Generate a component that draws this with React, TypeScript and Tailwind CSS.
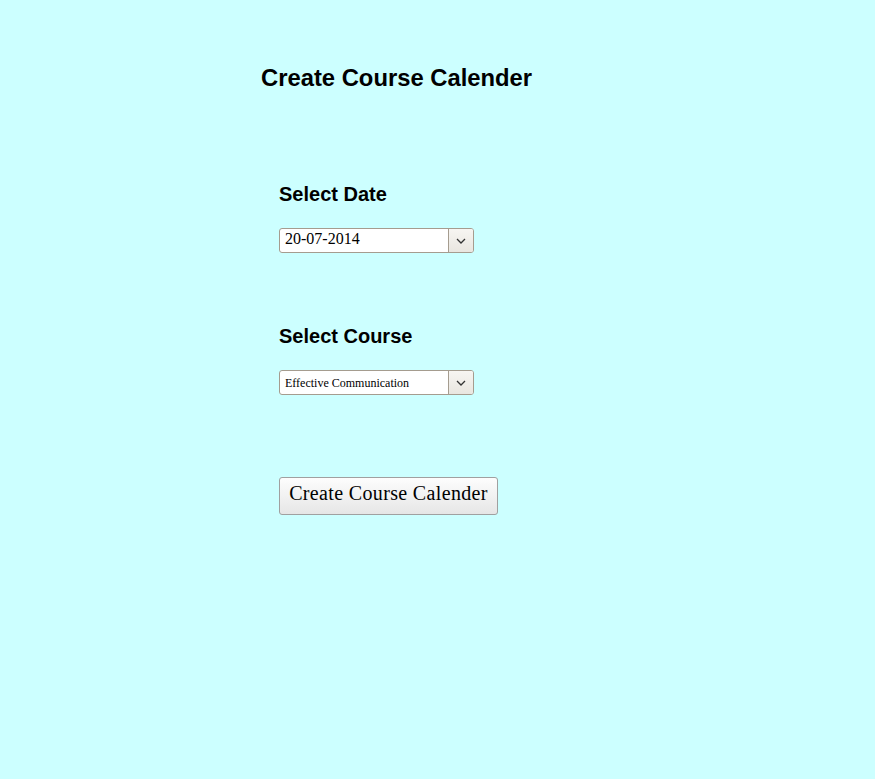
import React from "react";

function Chevron() {
  return (
    <svg width="10" height="6" viewBox="0 0 10 6" fill="none">
      <path d="M1 1 L5 5 L9 1" stroke="#333" strokeWidth="1.3" />
    </svg>
  );
}

function FakeSelect({ value, small }: { value: string; small?: boolean }) {
  return (
    <div className="flex h-[25px] w-[195px] rounded-[3px] border border-[#a59c8f] bg-white">
      <div
        className={`flex flex-1 items-center pl-[5px] text-black ${small ? "text-[12px]" : "pb-[3px] text-[16px]"}`}
        style={{ fontFamily: '"Liberation Serif", serif' }}
      >
        {value}
      </div>
      <div className="flex w-[25px] items-center justify-center rounded-r-[2px] border-l border-[#a59c8f] bg-gradient-to-b from-[#f7f5f2] to-[#e9e6e0]">
        <Chevron />
      </div>
    </div>
  );
}

export default function App() {
  return (
    <div
      className="min-h-[779px] w-full bg-[#ccffff] pl-[261px] pt-[64px]"
      style={{ fontFamily: '"Liberation Sans", Arial, sans-serif' }}
    >
      <h1 className="h-[28px] text-[23.8px] font-bold leading-[28px] text-black">
        Create Course Calender
      </h1>
      <div className="ml-[18px] mt-[90px] flex flex-col items-start">
        <h2 className="h-[24px] text-[20px] font-bold leading-[24px] text-black">Select Date</h2>
        <div className="mt-[22px]">
          <FakeSelect value="20-07-2014" />
        </div>
        <h2 className="mt-[71px] h-[24px] text-[20px] font-bold leading-[24px] text-black">Select Course</h2>
        <div className="mt-[22px]">
          <FakeSelect value="Effective Communication" small />
        </div>
        <button
          className="mt-[82px] h-[38px] w-[219px] rounded-[3px] border border-[#a0a0a0] bg-gradient-to-b from-[#fdfdfd] to-[#e6e6e6] pb-[6px] text-[20px] tracking-[0.35px] text-black"
          style={{ fontFamily: '"Liberation Serif", serif' }}
        >
          Create Course Calender
        </button>
      </div>
    </div>
  );
}
